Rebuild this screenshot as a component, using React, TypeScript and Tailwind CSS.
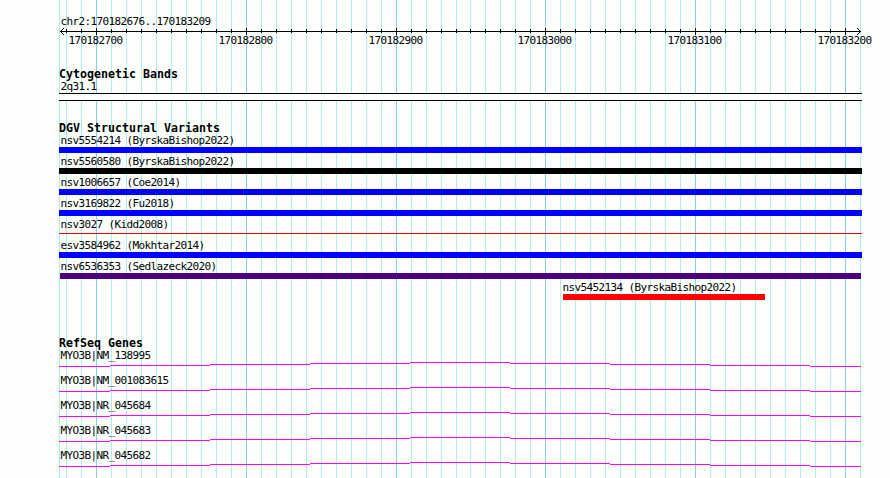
const mono = "font-['DejaVu_Sans_Mono',monospace]";

const ticks = Array.from({ length: 54 }, (_, i) => ({
    x: Math.floor(66.51 + 14.981 * i),
    major: i % 10 === 2,
}));

const axisLabels = [
    { text: "170182700", gap: "ml-[68px]" },
    { text: "170182800", gap: "ml-[96px]" },
    { text: "170182900", gap: "ml-[96px]" },
    { text: "170183000", gap: "ml-[95px]" },
    { text: "170183100", gap: "ml-[96px]" },
    { text: "170183200", gap: "ml-[96px]" },
];

const variants = [
    { name: "nsv5554214 (ByrskaBishop2022)", row: "ml-[59px]", label: "ml-px", bar: "w-[803px] h-1.5 bg-[#0000ff]" },
    { name: "nsv5560580 (ByrskaBishop2022)", row: "ml-[59px]", label: "ml-px", bar: "w-[803px] h-1.5 bg-black" },
    { name: "nsv1006657 (Coe2014)", row: "ml-[59px]", label: "ml-px", bar: "w-[803px] h-1.5 bg-[#0000ff]" },
    { name: "nsv3169822 (Fu2018)", row: "ml-[59px]", label: "ml-px", bar: "w-[803px] h-1.5 bg-[#0000ff]" },
    { name: "nsv3027 (Kidd2008)", row: "ml-[59px]", label: "ml-px", bar: "w-[803px] h-px mt-0.5 bg-[#e60000]" },
    { name: "esv3584962 (Mokhtar2014)", row: "ml-[59px]", label: "ml-px", bar: "w-[803px] h-1.5 bg-[#0000ff]" },
    { name: "nsv6536353 (Sedlazeck2020)", row: "ml-[60px]", label: "", bar: "w-[801px] h-1.5 bg-[#4b0082]" },
    { name: "nsv5452134 (ByrskaBishop2022)", row: "ml-[562px]", label: "", bar: "ml-px w-[202px] h-1.5 bg-[#ff0000]" },
];

const genes = [
    "MYO3B|NM_138995",
    "MYO3B|NM_001083615",
    "MYO3B|NR_045684",
    "MYO3B|NR_045683",
    "MYO3B|NR_045682",
];

// x start, x end, y of each intron step
const intron = [
    [0, 51, 4],
    [51, 151, 3],
    [151, 251, 2],
    [251, 351, 1],
    [351, 451, 0],
    [451, 551, 1],
    [551, 651, 2],
    [651, 751, 3],
    [751, 802, 4],
];

const GridLines = () => (
    <svg width="890" height="478" className="absolute inset-0 -z-10" shapeRendering="crispEdges">
        <rect x="59" y="0" width="1" height="478" fill="#afeeee" />
        {ticks.map(({ x, major }) => (
            <rect key={x} x={x} y="0" width="1" height="478" fill={major ? "#87ceeb" : "#afeeee"} />
        ))}
    </svg>
);

const Axis = () => (
    <svg width="890" height="9" className="-mt-px block" shapeRendering="crispEdges">
        <rect x="60" y="4" width="801" height="1" />
        {ticks.slice(0, -1).map(({ x, major }) => (
            <rect key={x} x={x} y={major ? 1 : 2} width="1" height={major ? 7 : 4} />
        ))}
        {[1, 2, 3].map((d) => (
            <g key={d}>
                <rect x={60 + d} y={4 - d} width="1" height="1" />
                <rect x={60 + d} y={4 + d} width="1" height="1" />
                <rect x={860 - d} y={4 - d} width="1" height="1" />
                <rect x={860 - d} y={4 + d} width="1" height="1" />
            </g>
        ))}
    </svg>
);

const Label = ({ text, className = "" }: { text: string; className?: string }) => (
    <div className={`h-3 pl-[0.5px] text-[11px] leading-3 tracking-[-0.622px] whitespace-pre ${className}`}>{text}</div>
);

const Heading = ({ text }: { text: string }) => (
    <h2 className="ml-[59px] h-3 text-[11.63px] leading-3 font-bold whitespace-pre">{text}</h2>
);

export default function App() {
    return (
        <div className={`relative isolate h-[478px] w-[890px] overflow-hidden bg-[#fdfffc] text-black ${mono}`}>
            <GridLines />

            <header className="pt-4">
                <Label text="chr2:170182676..170183209" className="ml-[60px]" />
                <Axis />
                <div className="-mt-px flex">
                    {axisLabels.map(({ text, gap }) => (
                        <Label key={text} text={text} className={`w-[54px] shrink-0 ${gap}`} />
                    ))}
                </div>
            </header>

            <section className="mt-[21px]">
                <Heading text="Cytogenetic Bands" />
                <Label text="2q31.1" className="mt-px ml-[60px]" />
                <div className="ml-[59px] h-2 w-[803px] border-y border-black bg-[#fdfffc]" />
            </section>

            <section className="mt-[21px]">
                <Heading text="DGV Structural Variants" />
                <div className="mt-px">
                    {variants.map(({ name, row, label, bar }) => (
                        <div key={name} className={`flex h-[21px] flex-col ${row}`}>
                            <Label text={name} className={label} />
                            <div className={`shrink-0 ${bar}`} />
                        </div>
                    ))}
                </div>
            </section>

            <section className="mt-[34px]">
                <Heading text="RefSeq Genes" />
                <div className="mt-px ml-[59px]">
                    {genes.map((name) => (
                        <div key={name} className="h-[25px]">
                            <Label text={name} className="ml-px" />
                            <svg width="802" height="5" className="block" shapeRendering="crispEdges">
                                {intron.map(([from, to, y]) => (
                                    <rect key={from} x={from} y={y} width={to - from} height="1" fill="#ff00ff" />
                                ))}
                            </svg>
                        </div>
                    ))}
                </div>
            </section>
        </div>
    );
}
